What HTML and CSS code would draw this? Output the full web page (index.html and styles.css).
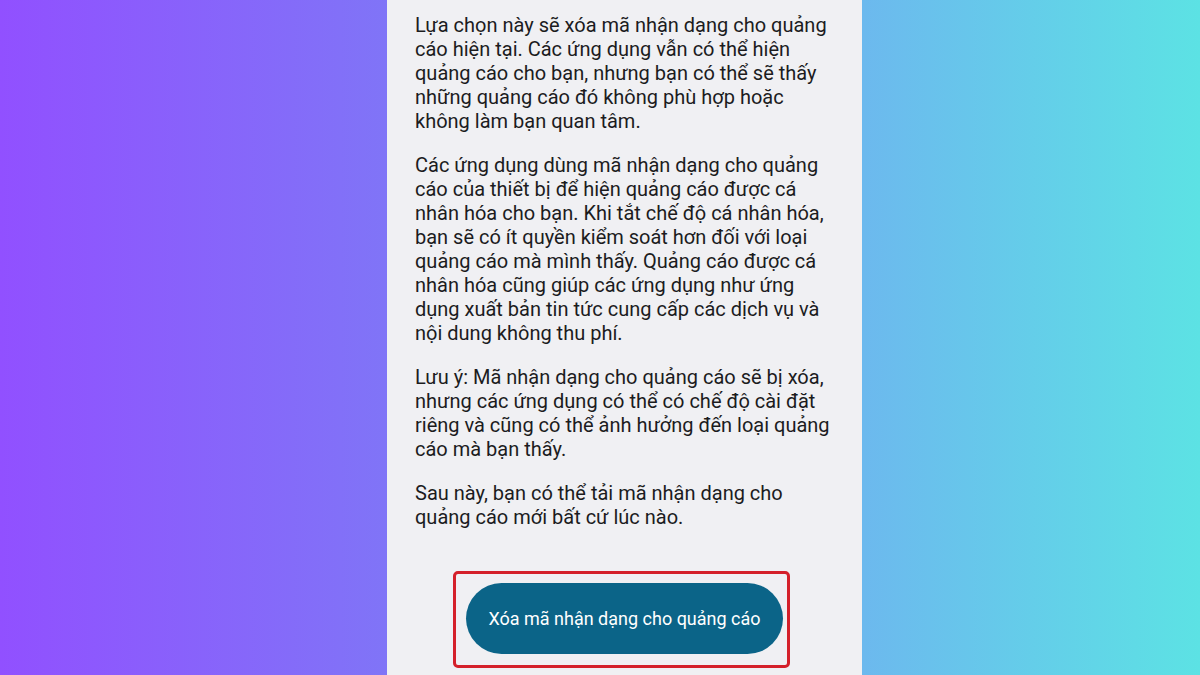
FILE: index.html
```html
<!DOCTYPE html>
<html lang="vi">
<head>
<meta charset="utf-8">
<link rel="stylesheet" href="styles.css">
</head>
<body>
<div class="stage">
  <div class="panel">
    <p class="para">Lựa chọn này sẽ xóa mã nhận dạng cho quảng<br>cáo hiện tại. Các ứng dụng vẫn có thể hiện<br>quảng cáo cho bạn, nhưng bạn có thể sẽ thấy<br>những quảng cáo đó không phù hợp hoặc<br>không làm bạn quan tâm.</p>
    <p class="para">Các ứng dụng dùng mã nhận dạng cho quảng<br>cáo của thiết bị để hiện quảng cáo được cá<br>nhân hóa cho bạn. Khi tắt chế độ cá nhân hóa,<br>bạn sẽ có ít quyền kiểm soát hơn đối với loại<br>quảng cáo mà mình thấy. Quảng cáo được cá<br>nhân hóa cũng giúp các ứng dụng như ứng<br>dụng xuất bản tin tức cung cấp các dịch vụ và<br>nội dung không thu phí.</p>
    <p class="para">Lưu ý: Mã nhận dạng cho quảng cáo sẽ bị xóa,<br>nhưng các ứng dụng có thể có chế độ cài đặt<br>riêng và cũng có thể ảnh hưởng đến loại quảng<br>cáo mà bạn thấy.</p>
    <p class="para">Sau này, bạn có thể tải mã nhận dạng cho<br>quảng cáo mới bất cứ lúc nào.</p>
    <div class="highlight">
      <button class="btn">Xóa mã nhận dạng cho quảng cáo</button>
    </div>
  </div>
</div>
</body>
</html>
```
FILE: styles.css
```css
html, body {
  margin: 0;
  padding: 0;
  height: 100%;
}
body {
  width: 1200px;
  height: 675px;
  overflow: hidden;
  background: linear-gradient(90deg, #9150ff 0%, #8074f7 32%, #6cb9ee 72%, #5ce2e4 100%);
  font-family: Roboto, "Noto Sans", sans-serif;
}
.stage {
  display: flex;
  height: 675px;
}
.panel {
  margin-left: 387px;
  width: 475px;
  height: 675px;
  box-sizing: border-box;
  background: #f0f0f3;
  padding: 13px 0 0 28px;
  display: flex;
  flex-direction: column;
  overflow: hidden;
}
.para {
  margin: 0 0 20px 0;
  font-size: 20px;
  line-height: 24px;
  color: #1c1c1e;
  white-space: nowrap;
}
.highlight {
  margin-top: 22px;
  margin-left: 38px;
  width: 337px;
  height: 97px;
  box-sizing: border-box;
  border: 3px solid #d4202a;
  border-radius: 5px;
  padding: 9px 5px 0 10px;
  flex-shrink: 0;
}
.btn {
  width: 317px;
  height: 71px;
  border: none;
  border-radius: 36px;
  background: #0b6488;
  color: #ffffff;
  font-family: Roboto, "Noto Sans", sans-serif;
  font-size: 18px;
  padding: 0;
}
```
